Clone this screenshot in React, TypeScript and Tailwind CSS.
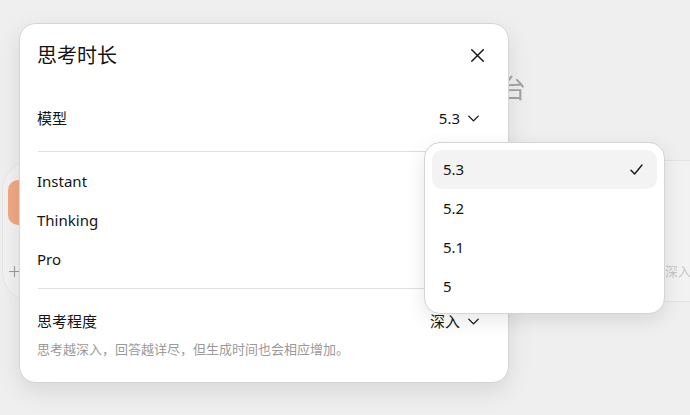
import { X, ChevronDown, Plus } from "lucide-react";

const font = { fontFamily: '"Noto Sans", "Noto Sans CJK SC", sans-serif' };

const modes = ["Instant", "Thinking", "Pro"];
const versions = ["5.3", "5.2", "5.1", "5"];

function CheckMark() {
    return (
        <svg width="13" height="11" viewBox="0 0 13 11" fill="none">
            <path d="M1 6.2 4.6 10 12 1" stroke="#1a1a1a" strokeWidth="1.4" strokeLinecap="round" strokeLinejoin="round" />
        </svg>
    );
}

export default function App() {
    return (
        <div className="relative w-[690px] h-[415px] overflow-hidden bg-[#efefef] text-[#141414]" style={font}>
            {/* Page behind the dialog */}
            <div className="flex flex-col pt-[74px] blur-[0.5px]">
                <div className="ml-[474px] text-[26px] leading-[28px] text-[#a3a3a3] whitespace-nowrap">平台</div>
                <div className="mt-[58px] ml-[2px] w-[720px] h-[142px] rounded-[30px] border border-[#e3e3e3] bg-[#f2f2f2] flex flex-col pt-[19px] pl-[5px] pb-[20px]">
                    <div className="w-[40px] h-[45px] rounded-[10px] bg-[#f0a985]" />
                    <div className="mt-auto flex items-center justify-between pr-[30px]">
                        <Plus size={17} strokeWidth={1.5} className="ml-[-2px] text-[#9a9a9a]" />
                        <span className="text-[13px] text-[#c4c4c4]">深入</span>
                    </div>
                </div>
            </div>

            {/* Dialog */}
            <div className="absolute left-[19px] top-[23px] w-[490px] rounded-[17px] border border-[#d6d6d6] bg-white shadow-[0_8px_24px_rgba(0,0,0,0.10)]">
                <div className="h-[63px] pl-[17px] pr-[18px] flex items-center justify-between">
                    <h2 className="text-[20px] leading-[28px] font-normal">思考时长</h2>
                    <button className="w-[26px] h-[26px] flex items-center justify-center">
                        <X size={23} strokeWidth={1.5} />
                    </button>
                </div>

                <div className="h-[62px] pl-[17px] pr-[18px] flex items-center justify-between">
                    <span className="text-[15px]">模型</span>
                    <span className="mr-[7px] flex items-center gap-[4px] text-[15px]">
                        5.3 <ChevronDown size={19} strokeWidth={1.7} />
                    </span>
                </div>

                <div className="mx-[18px] mt-[2px] h-px bg-[#dedede]" />

                <div className="pl-[17px] pr-[18px] pt-[10px] pb-[9px] flex flex-col">
                    {modes.map(m => (
                        <div key={m} className="h-[39px] flex items-center text-[15px]">{m}</div>
                    ))}
                </div>

                <div className="mx-[18px] h-px bg-[#dedede]" />

                <div className="pl-[17px] pr-[18px] pt-[21px] pb-[23px]">
                    <div className="flex items-center justify-between h-[22px]">
                        <span className="text-[15px]">思考程度</span>
                        <span className="mr-[7px] flex items-center gap-[4px] text-[15px]">
                            深入 <ChevronDown size={19} strokeWidth={1.7} />
                        </span>
                    </div>
                    <p className="mt-[7px] text-[13px] leading-[20px] text-[#9a9a9a]">
                        思考越深入，回答越详尽，但生成时间也会相应增加。
                    </p>
                </div>
            </div>

            {/* Version menu */}
            <div className="absolute left-[424px] top-[142px] w-[241px] rounded-[16px] border border-[#d4d4d4] bg-white p-[7px] shadow-[0_6px_20px_rgba(0,0,0,0.10)]">
                {versions.map((v, i) => (
                    <div
                        key={v}
                        className={`h-[39px] rounded-[10px] pl-[11px] pr-[14px] flex items-center justify-between text-[15px] ${i === 0 ? "bg-[#f3f3f3]" : ""}`}
                    >
                        <span>{v}</span>
                        {i === 0 && <CheckMark />}
                    </div>
                ))}
            </div>
        </div>
    );
}
